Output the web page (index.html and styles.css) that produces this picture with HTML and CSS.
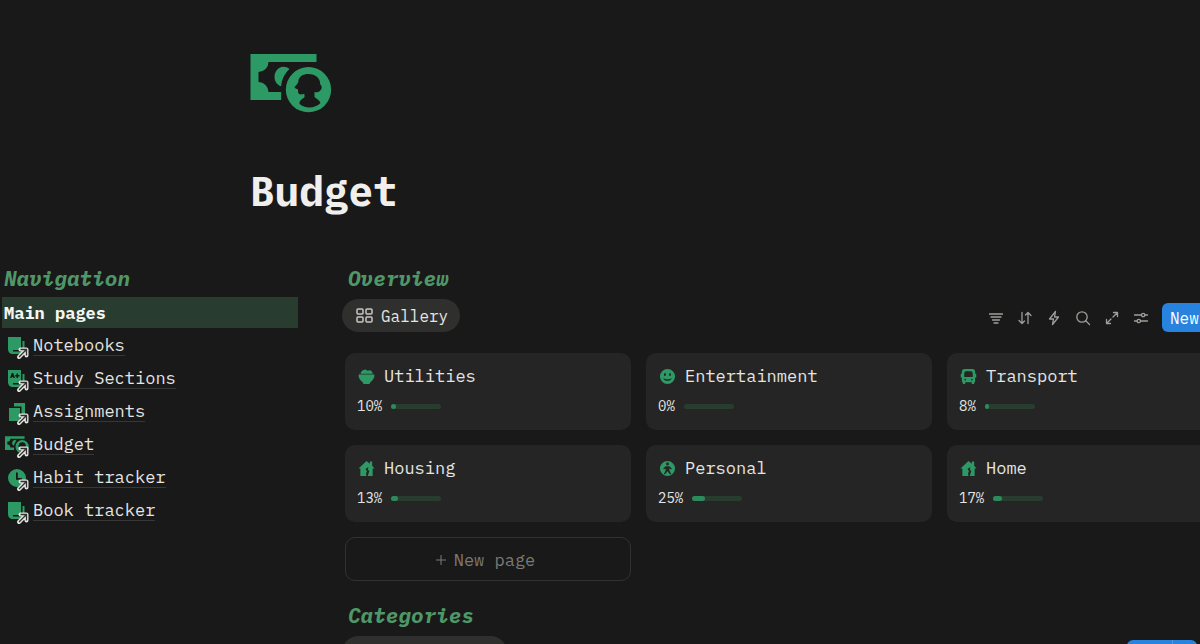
FILE: index.html
```html
<!DOCTYPE html>
<html lang="en">
<head>
  <meta charset="UTF-8">
  <meta name="viewport" content="width=device-width, initial-scale=1">
  <title>Budget</title>
  <link rel="stylesheet" href="styles.css">
</head>
<body>
  <!-- shared icons -->
  <svg class="sprite" aria-hidden="true">
    <symbol id="money" viewBox="0 0 243 177">
      <path d="M0 0H198V24H54A30 30 0 0 1 24 54V84A30 30 0 0 1 54 114H92V138H0Z"/>
      <path d="M117 45C108 37 95 36 86 42C76 49 72 58 72 69C72 81 79 93 92 97C94 76 102 59 117 45Z"/>
      <path fill-rule="evenodd" d="M174 39a68 68 0 1 0 0 136a68 68 0 1 0 0-136ZM173 60C158 60 147 67 144 78C145 86 138 93 132 99C133 105 142 104 143 108C142 113 143 120 148 121C154 122 157 119 162 121V130C154 136 147 140 147 149C163 165 194 164 210 147C207 139 200 136 192 129V114C199 116 204 115 207 112C216 105 215 97 209 91C210 73 196 60 173 60Z"/>
    </symbol>
    <symbol id="book" viewBox="0 0 18 18">
      <path d="M0 0H13V13H5V14.500H13V17H5C2 17 0 15 0 12Z"/>
      <path d="M14.500 4H16.500V14H14.500Z"/>
    </symbol>
    <symbol id="graded" viewBox="0 0 18 18">
      <path fill-rule="evenodd" d="M0 0H13V13H5V14.500H13V17H5C2 17 0 15 0 12ZM2 8H3.500L4 7H5L5.500 8H7L5.200 3H3.800ZM8.500 3.500V5H7.200V6.500H8.500V8H10V6.500H11.500V5H10V3.500Z"/>
      <path d="M14.500 4H16.500V14H14.500Z"/>
    </symbol>
    <symbol id="copies" viewBox="0 0 18 18">
      <path d="M6 0H17V13H13.500V3.500H6ZM1 5H12V18H1Z"/>
    </symbol>
    <symbol id="clock" viewBox="0 0 18 18">
      <path fill-rule="evenodd" d="M9 0a9 9 0 1 0 0 18a9 9 0 1 0 0-18ZM8 3.500H9.800V9H14V10.800H8Z"/>
    </symbol>
    <symbol id="link-arrow" viewBox="0 0 14 14">
      <path class="arrow-line" d="M3 11L10 4M4.500 3.500H10.500V9.500"/>
      <path class="arrow-core" d="M3 11L10 4M4.500 3.500H10.500V9.500"/>
    </symbol>
    <symbol id="bowl" viewBox="0 0 18 18">
      <path d="M3 6V4.500L5 2.500L8 1.500L10 3L13 2.500L15 4L15.500 6ZM.5 7.500H17.500C17.500 11 15 14 12.500 15.500V17H5.500V15.500C3 14 .5 11 .5 7.500Z"/>
      <path opacity=".55" d="M1 6H17V8H1Z"/>
    </symbol>
    <symbol id="smile" viewBox="0 0 18 18">
      <path fill-rule="evenodd" d="M9 1a8 8 0 1 0 0 16a8 8 0 1 0 0-16ZM6.300 5.200c1.300 0 1.300 3.200 0 3.200s-1.300-3.200 0-3.200ZM11.700 5.200c1.300 0 1.300 3.200 0 3.200s-1.300-3.200 0-3.200ZM4.500 10.500C6.500 12.500 11.500 12.500 13.500 10.500C12.500 14.500 5.500 14.500 4.500 10.500Z"/>
    </symbol>
    <symbol id="bus" viewBox="0 0 18 18">
      <path fill-rule="evenodd" d="M5 1H13Q16 1 16 4V6H17.200V10H16V15H15V17H12.500V15H5.500V17H3V15H2V10H.8V6H2V4Q2 1 5 1ZM6.500 3.500H11.500Q13.500 3.500 13.500 5.500V9.500H4.500V5.500Q4.500 3.500 6.500 3.500ZM5.500 11.400a.9.9 0 1 0 0 1.800a.9.9 0 1 0 0-1.800ZM12.500 11.400a.9.9 0 1 0 0 1.800a.9.9 0 1 0 0-1.800Z"/>
    </symbol>
    <symbol id="house" viewBox="0 0 18 18">
      <path fill-rule="evenodd" d="M9 1L12.500 4V1.500H15V6L17.500 9H15.500V17H10.500L11 14.500L12 12L10.500 10L11 7.500L8 9.500L9.500 12L8.500 14L9 17H2.500V9H.5Z"/>
    </symbol>
    <symbol id="person" viewBox="0 0 18 18">
      <path fill-rule="evenodd" d="M9 1a8 8 0 1 0 0 16a8 8 0 1 0 0-16ZM9 2.700a1.500 1.500 0 1 0 0 3a1.500 1.500 0 1 0 0-3ZM7 6.500H11L13.500 9L12.700 10L11 8.800V11L13 15H11.500L9 12L6.500 15H5L7 11V8.800L5.300 10L4.500 9Z"/>
    </symbol>
  </svg>

  <header class="page-header">
    <svg class="page-icon" aria-hidden="true"><use href="#money"/></svg>
    <h1>Budget</h1>
  </header>

  <div class="columns">
    <nav class="sidebar">
      <h2>Navigation</h2>
      <h3>Main pages</h3>
      <ul>
        <li><a href="#"><span class="nav-icon"><svg class="glyph"><use href="#book"/></svg><svg class="badge"><use href="#link-arrow"/></svg></span><span class="nav-text">Notebooks</span></a></li>
        <li><a href="#"><span class="nav-icon"><svg class="glyph"><use href="#graded"/></svg><svg class="badge"><use href="#link-arrow"/></svg></span><span class="nav-text">Study Sections</span></a></li>
        <li><a href="#"><span class="nav-icon"><svg class="glyph"><use href="#copies"/></svg><svg class="badge"><use href="#link-arrow"/></svg></span><span class="nav-text">Assignments</span></a></li>
        <li><a href="#"><span class="nav-icon"><svg class="glyph wide"><use href="#money"/></svg><svg class="badge"><use href="#link-arrow"/></svg></span><span class="nav-text">Budget</span></a></li>
        <li><a href="#"><span class="nav-icon"><svg class="glyph"><use href="#clock"/></svg><svg class="badge"><use href="#link-arrow"/></svg></span><span class="nav-text">Habit tracker</span></a></li>
        <li><a href="#"><span class="nav-icon"><svg class="glyph"><use href="#book"/></svg><svg class="badge"><use href="#link-arrow"/></svg></span><span class="nav-text">Book tracker</span></a></li>
      </ul>
    </nav>

    <main class="content">
      <section>
        <h2>Overview</h2>
        <div class="view-bar">
          <button class="tab" type="button">
            <svg class="tab-icon" viewBox="0 0 18 16"><rect x="1" y="1" width="6" height="5" rx="1"/><rect x="10" y="1" width="6" height="5" rx="1"/><rect x="1" y="9" width="6" height="5" rx="1"/><rect x="10" y="9" width="6" height="5" rx="1"/></svg>
            Gallery
          </button>
          <div class="tools">
            <button class="tool" type="button" aria-label="Filter"><svg viewBox="0 0 16 16"><path d="M1.500 4H14.500M3 7H13M4.500 10H11.500M6 13H10"/></svg></button>
            <button class="tool" type="button" aria-label="Sort"><svg viewBox="0 0 16 16"><path d="M5 2.500V13.500M2 10.500L5 13.500L7.500 11M11 13.500V2.500M8.500 5L11 2.500L14 5.500"/></svg></button>
            <button class="tool" type="button" aria-label="Automations"><svg viewBox="0 0 16 16"><path d="M9.500 1.500L3.500 9H7.500L6.500 14.500L12.500 7H8.500Z"/></svg></button>
            <button class="tool" type="button" aria-label="Search"><svg viewBox="0 0 16 16"><circle cx="7" cy="7" r="5.200"/><path d="M11 11L14.500 14.500"/></svg></button>
            <button class="tool" type="button" aria-label="Expand"><svg viewBox="0 0 16 16"><path d="M9.500 2.500H13.500V6.500M13.500 2.500L9 7M2.500 9.500V13.500H6.500M2.500 13.500L7 9"/></svg></button>
            <button class="tool" type="button" aria-label="Settings"><svg viewBox="0 0 16 16"><path d="M1.500 5H8.500M12 5H14.500M1.500 11H4M7.500 11H14.500"/><circle cx="10.200" cy="5" r="1.700"/><circle cx="5.800" cy="11" r="1.700"/></svg></button>
            <button class="new" type="button">New</button>
          </div>
        </div>

        <div class="gallery">
          <article class="card">
            <h4><svg><use href="#bowl"/></svg>Utilities</h4>
            <div class="percent">10%<span class="bar"><span class="fill" style="width: 10%"></span></span></div>
          </article>
          <article class="card">
            <h4><svg><use href="#smile"/></svg>Entertainment</h4>
            <div class="percent">0%<span class="bar"></span></div>
          </article>
          <article class="card">
            <h4><svg><use href="#bus"/></svg>Transport</h4>
            <div class="percent">8%<span class="bar"><span class="fill" style="width: 8%"></span></span></div>
          </article>
          <article class="card">
            <h4><svg><use href="#house"/></svg>Housing</h4>
            <div class="percent">13%<span class="bar"><span class="fill" style="width: 13%"></span></span></div>
          </article>
          <article class="card">
            <h4><svg><use href="#person"/></svg>Personal</h4>
            <div class="percent">25%<span class="bar"><span class="fill" style="width: 25%"></span></span></div>
          </article>
          <article class="card">
            <h4><svg><use href="#house"/></svg>Home</h4>
            <div class="percent">17%<span class="bar"><span class="fill" style="width: 17%"></span></span></div>
          </article>
          <button class="new-page" type="button"><svg viewBox="0 0 12 12"><path d="M6 1V11M1 6H11"/></svg>New page</button>
        </div>
      </section>

      <section class="categories">
        <h2>Categories</h2>
        <div class="view-bar">
          <button class="tab tab-wide" type="button" aria-label="Categories view"></button>
          <button class="new split" type="button" aria-label="New category"></button>
        </div>
      </section>
    </main>
  </div>
</body>
</html>
```

FILE: styles.css
```css
* {
  box-sizing: border-box;
}
body {
  margin: 0;
  height: 100vh;
  overflow: hidden;
  background: #191919;
  color: #e6e5e3;
  font-family: "IBM Plex Mono", "Liberation Mono", monospace;
  font-size: 17px;
  line-height: 24px;
}
h1, h2, h3, h4, ul {
  margin: 0;
  padding: 0;
}
button {
  border: 0;
  font: inherit;
  color: inherit;
}
svg {
  flex: none;
}
.sprite {
  display: none;
}

/* header */
.page-header {
  padding: 54px 0 0 250px;
}
.page-icon {
  display: block;
  width: 82px;
  height: 59px;
  fill: #2d9964;
}
h1 {
  margin-top: 52px;
  color: #f0efed;
  font-size: 41px;
  line-height: 52px;
}
h2 {
  color: #4f9768;
  font-size: 21px;
  font-style: italic;
  line-height: 28px;
}

.columns {
  display: flex;
  gap: 44px;
  margin-top: 47px;
  padding-left: 2px;
}

/* sidebar */
.sidebar {
  width: 296px;
  flex: none;
}
.sidebar h2,
.sidebar h3 {
  padding-left: 2px;
}
.sidebar h3 {
  margin: 5px 0 1px;
  padding-top: 1px;
  background: #283d30;
  color: #f5f5f3;
  font-size: 17px;
  line-height: 30px;
}
.sidebar ul {
  list-style: none;
}
.sidebar a {
  display: flex;
  align-items: center;
  gap: 4px;
  height: 33px;
  padding-left: 3px;
  color: inherit;
  text-decoration: none;
}
.nav-icon {
  position: relative;
  display: flex;
  justify-content: center;
  align-items: center;
  width: 24px;
  height: 24px;
}
.glyph {
  width: 18px;
  height: 18px;
  fill: #2d9964;
}
.glyph.wide {
  width: 24px;
}
.badge {
  position: absolute;
  right: -1px;
  bottom: -2px;
  width: 14px;
  height: 14px;
  fill: none;
}
.arrow-line {
  stroke: #e6e5e3;
  stroke-width: 4;
  stroke-linejoin: round;
  stroke-linecap: round;
}
.arrow-core {
  stroke: #30302e;
  stroke-width: 1.3;
}
.nav-text {
  border-bottom: 1px solid #373737;
  line-height: 20px;
}

/* content runs past the right edge of the window */
.content {
  flex: 1;
  min-width: 0;
  margin-right: -33px;
}
.content h2 {
  padding-left: 6px;
}
.view-bar {
  display: flex;
  align-items: flex-end;
  justify-content: space-between;
  margin-top: 7px;
}
.tab {
  display: flex;
  align-items: center;
  gap: 7px;
  height: 33px;
  padding: 1px 12px 0 14px;
  border-radius: 17px;
  background: #2f2f2d;
  font-size: 16px;
}
.tab-icon {
  width: 18px;
  height: 16px;
  fill: none;
  stroke: #c8c7c4;
  stroke-width: 1.5;
}
.tools {
  display: flex;
  align-items: center;
}
.tool {
  display: flex;
  justify-content: center;
  width: 29px;
  padding: 6px 0;
  background: none;
}
.tool svg {
  width: 16px;
  height: 16px;
  fill: none;
  stroke: #a19e99;
  stroke-width: 1.3;
  stroke-linecap: round;
  stroke-linejoin: round;
}
.new {
  width: 71px;
  height: 29px;
  margin-left: 7px;
  padding: 0 8px;
  border-radius: 6px;
  background: #2783de;
  color: #fff;
  font-size: 16px;
  text-align: left;
}

.gallery {
  display: grid;
  grid-template-columns: repeat(3, 1fr);
  gap: 15px;
  margin: 21px 0 0 3px;
}
.card {
  height: 77px;
  padding: 11px 12px;
  border-radius: 10px;
  background: #252525;
}
.card h4 {
  display: flex;
  align-items: center;
  gap: 9px;
  font-size: 17px;
  font-weight: normal;
}
.card h4 svg {
  width: 17px;
  height: 17px;
  margin-left: 1px;
  fill: #2d9964;
}
.percent {
  display: flex;
  align-items: center;
  gap: 9px;
  margin-top: 8px;
  font-size: 14px;
  line-height: 20px;
}
.bar {
  width: 50px;
  height: 5px;
  border-radius: 3px;
  background: #283d30;
}
.fill {
  display: block;
  height: 5px;
  border-radius: 3px;
  background: #2d8a5b;
}
.new-page {
  display: flex;
  align-items: center;
  justify-content: center;
  gap: 7px;
  height: 44px;
  padding: 1px 12px 0 6px;
  border: 1px solid #313131;
  border-radius: 10px;
  background: none;
  color: #7d7a75;
}
.new-page svg {
  width: 12px;
  height: 12px;
  stroke: #7d7a75;
}

.categories {
  margin-top: 20px;
}
.tab-wide {
  width: 165px;
}
.split {
  width: 70px;
  margin-right: 36px;
  background: linear-gradient(90deg, #2783de 45px, #4a98e3 45px, #4a98e3 46px, #2783de 46px);
}
```
